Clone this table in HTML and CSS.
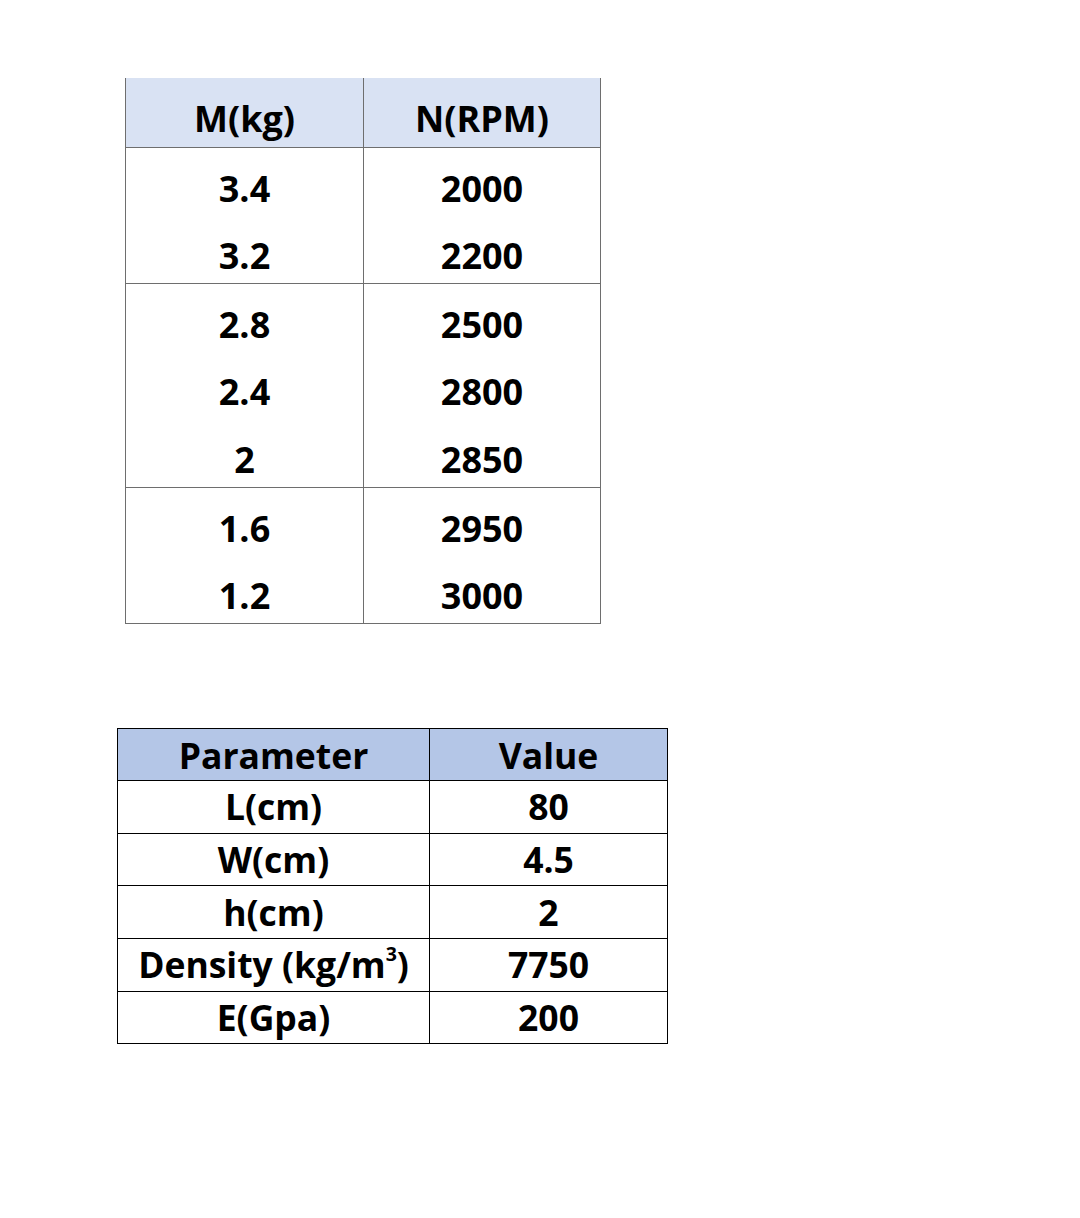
FILE: index.html
```html
<!DOCTYPE html>
<html>
<head>
<meta charset="utf-8">
<link rel="stylesheet" href="styles.css">
</head>
<body>
<div class="page">
  <table class="t1">
    <thead>
      <tr><th>M(kg)</th><th>N(RPM)</th></tr>
    </thead>
    <tbody>
      <tr><td>3.4</td><td>2000</td></tr>
      <tr class="sep"><td>3.2</td><td>2200</td></tr>
      <tr><td>2.8</td><td>2500</td></tr>
      <tr><td>2.4</td><td>2800</td></tr>
      <tr class="sep"><td>2</td><td>2850</td></tr>
      <tr><td>1.6</td><td>2950</td></tr>
      <tr class="sep"><td>1.2</td><td>3000</td></tr>
    </tbody>
  </table>

  <table class="t2">
    <thead>
      <tr><th>Parameter</th><th>Value</th></tr>
    </thead>
    <tbody>
      <tr><td>L(cm)</td><td>80</td></tr>
      <tr><td>W(cm)</td><td>4.5</td></tr>
      <tr><td>h(cm)</td><td>2</td></tr>
      <tr><td>Density (kg/m<sup>3</sup>)</td><td>7750</td></tr>
      <tr><td>E(Gpa)</td><td>200</td></tr>
    </tbody>
  </table>
</div>
</body>
</html>
```

FILE: styles.css
```css
html, body {
  margin: 0;
  padding: 0;
  background: #ffffff;
}
.page {
  padding-top: 78px;
  font-family: "Open Sans", Lato, sans-serif;
  font-weight: 700;
  color: #000;
}
table {
  border-collapse: collapse;
  table-layout: fixed;
}
th, td {
  padding: 0;
  text-align: center;
  font-weight: 700;
}
.t1 {
  margin-left: 125px;
  width: 476px;
  font-size: 36px;
}
.t1 th, .t1 td {
  border-left: 1px solid #6e6e6e;
  border-right: 1px solid #6e6e6e;
  line-height: 40px;
  vertical-align: top;
  box-sizing: border-box;
}
.t1 th:first-child, .t1 td:first-child {
  width: 238px;
}
.t1 th {
  height: 69px;
  background: #d9e2f3;
  border-bottom: 1px solid #6e6e6e;
  padding-top: 21px;
}
.t1 td {
  height: 68px;
  padding-top: 21px;
}
.t1 tr.sep td {
  height: 68px;
  border-bottom: 1px solid #6e6e6e;
}
.t2 {
  margin-left: 117px;
  margin-top: 104px;
  width: 551px;
  font-size: 35.5px;
}
.t2 th, .t2 td {
  border: 1px solid #000;
  height: 52.67px;
  line-height: 1;
  box-sizing: border-box;
}
.t2 th {
  padding-top: 2px;
}
.t2 th:first-child, .t2 td:first-child {
  width: 312px;
}
.t2 th {
  background: #b4c6e7;
}
.t2 sup {
  font-size: 0.55em;
  line-height: 0;
  vertical-align: 0.85em;
}
```
